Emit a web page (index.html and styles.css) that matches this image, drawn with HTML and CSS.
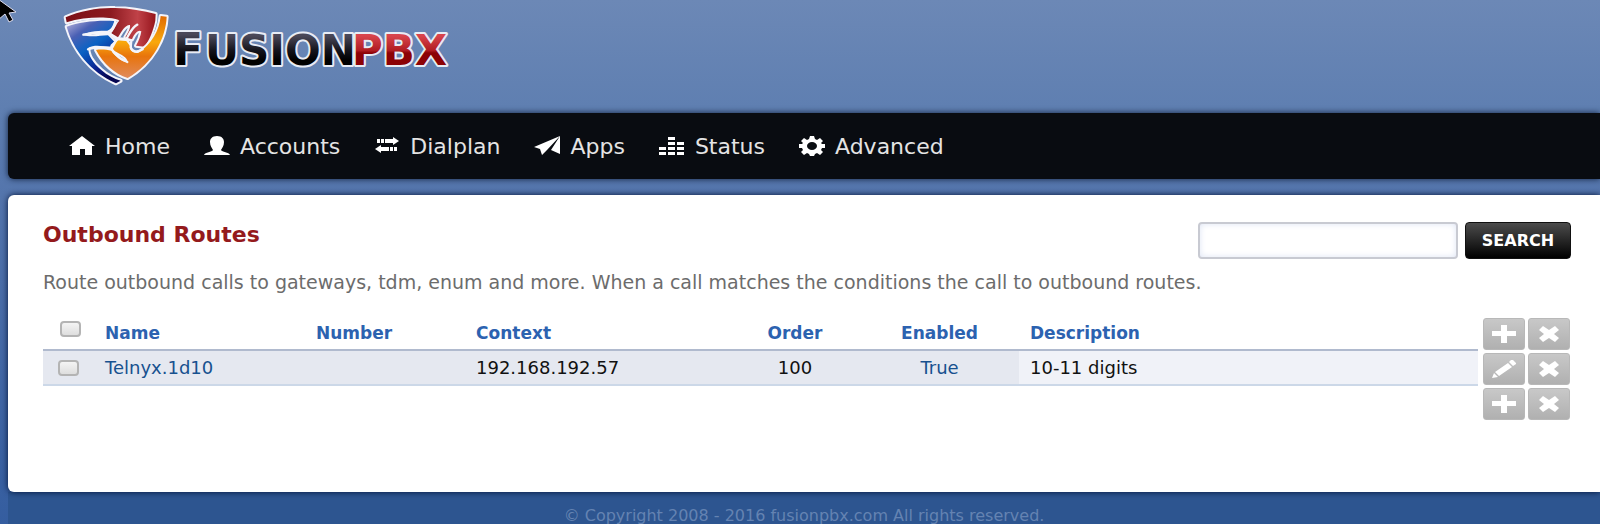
FILE: index.html
```html
<!DOCTYPE html>
<html lang="en">
<head>
  <meta charset="UTF-8">
  <meta name="viewport" content="width=device-width, initial-scale=1.0">
  <title>Outbound Routes</title>
  <link rel="stylesheet" href="styles.css">
</head>
<body>

  <!-- shared icons -->
  <svg class="sprite" aria-hidden="true">
    <symbol id="plus" viewBox="0 0 24 18"><path d="M9 0h6v6h9v5h-9v7H9v-7H0V6h9z"/></symbol>
    <symbol id="cross" viewBox="0 0 24 18"><path d="M6 1l6 4 6-4 4 4-5 4 5 4-4 4-6-4-6 4-4-4 5-4-5-4z"/></symbol>
    <symbol id="pencil" viewBox="0 0 24 18"><path d="M0 18l2-5 4 4zM3 12L16 3l4 4L7 16zM17 2l2-2h2l3 3v1l-3 2z"/></symbol>
  </svg>

  <svg class="cursor" viewBox="0 0 18 24" aria-hidden="true"><path d="M-2-1L16 12l-7 1 4 7-4 2-4-8-7 6z"/></svg>

  <header class="header">
    <a href="#" class="logo">
      <svg width="400" height="94" viewBox="60 0 400 94" role="img" aria-label="FusionPBX">
        <defs>
          <linearGradient id="red" x1="0" x2="1"><stop offset="0" stop-color="#7c1017"/><stop offset=".5" stop-color="#8c1a20"/><stop offset=".8" stop-color="#c04248"/><stop offset="1" stop-color="#96141c"/></linearGradient>
          <linearGradient id="blue" x1="0" y1="0" x2=".6" y2="1"><stop offset="0" stop-color="#b9b4dc"/><stop offset=".25" stop-color="#4a60b4"/><stop offset=".5" stop-color="#0b62c4"/><stop offset=".8" stop-color="#0a2290"/><stop offset="1" stop-color="#050550"/></linearGradient>
          <linearGradient id="orange" x1="0" y1="0" x2="0" y2="1"><stop offset="0" stop-color="#e06c04"/><stop offset=".42" stop-color="#f9a80c"/><stop offset=".65" stop-color="#e8740c"/><stop offset="1" stop-color="#e08a5c"/></linearGradient>
          <linearGradient id="ink" x1="0" y1="0" x2="0" y2="1"><stop offset=".2" stop-color="#4a4858"/><stop offset=".5" stop-color="#14141c"/><stop offset=".7" stop-color="#000"/></linearGradient>
          <linearGradient id="pbx" x1="0" y1="0" x2="0" y2="1"><stop offset=".2" stop-color="#d8444c"/><stop offset=".5" stop-color="#b01c22"/><stop offset=".55" stop-color="#8c0206"/></linearGradient>
        </defs>
        <g class="shield" transform="scale(.3333)">
          <path fill="url(#red)" d="M197 52C240 32 300 22 345 24C390 25 430 32 467 42L466 62C460 92 448 120 434 140L408 137C417 122 422 108 424 94C414 88 404 100 396 118L376 112C384 98 392 86 390 75C375 74 365 95 354 112L333 99C345 88 348 72 358 62C340 50 260 48 200 67Z"/>
          <path fill="url(#blue)" d="M200 80C240 66 290 60 343 63C340 76 334 88 322 92C300 92 270 92 248 105C270 113 300 107 324 106L343 125L332 140C308 140 286 132 266 143C262 162 278 188 304 210C322 226 342 236 362 242L348 250C270 215 220 150 200 80Z"/>
          <path fill="url(#orange)" d="M482 48L500 50C498 112 460 190 383 234C345 222 310 192 288 150C305 147 320 150 335 152C345 168 360 182 380 187C387 182 376 170 360 162C345 154 334 148 337 138L358 118L376 119L390 138C388 148 398 162 416 158C455 132 478 92 482 48Z"/>
        </g>
        <g class="gaps" transform="scale(.3333)">
          <path d="M250 104C274 98 300 98 326 98L350 118L336 144C310 144 286 138 264 148"/>
          <path d="M346 66C344 80 336 90 330 98"/>
          <path d="M412 74C398 80 390 98 380 115"/>
          <path d="M350 117L394 121L392 142C396 156 412 158 428 148"/>
          <path d="M334 146C344 166 362 176 382 186"/>
        </g>
        <g class="wordmark">
          <text x="173" y="65" font-size="44" fill="url(#ink)">F</text>
          <text x="205" y="65" font-size="42" fill="url(#ink)">USION</text>
          <text x="352" y="65" font-size="42" fill="url(#pbx)">PBX</text>
        </g>
      </svg>
    </a>
  </header>

  <nav class="menu">
    <a href="#"><svg viewBox="0 0 26 20"><path d="M13 0l13 10h-3v9h-7v-6h-5v6H3v-9H0z"/></svg>Home</a>
    <a href="#"><svg viewBox="0 0 26 20"><path d="M13 0c5 0 7 3 7 6 0 4-2 6-3 8 1 2 8 2 9 5H0c1-3 8-3 9-5-1-2-3-4-3-8 0-3 2-6 7-6z"/></svg>Accounts</a>
    <a href="#"><svg viewBox="0 0 26 20"><path d="M11 3h8V1l6 4-6 4V7h-8zM7 3h3v4H7zM3 3h3v4H3zM15 11H7V9l-6 4 6 4v-2h8zM16 11h3v4h-3zM20 11h3v4h-3z"/></svg>Dialplan</a>
    <a href="#"><svg viewBox="0 0 26 20"><path d="M26 0v18l-9-4L26 0 13 14l-5 5-2-6-6-2z"/></svg>Apps</a>
    <a href="#"><svg viewBox="0 0 26 20"><path d="M0 11h7v3H0zM0 16h7v3H0zM9 1h7v3H9zM9 6h7v3H9zM9 11h7v3H9zM9 16h7v3H9zM18 6h7v3h-7zM18 11h7v3h-7zM18 16h7v3h-7z"/></svg>Status</a>
    <a href="#"><svg viewBox="0 0 26 20"><path fill-rule="evenodd" d="M11 0h4l1 3 2 1 3-2 3 3-2 2 1 1h3v4h-3l-1 2 2 2-3 3-3-2-2 1-1 2h-4l-1-2-2-1-3 2-3-3 2-2-1-2H0V8h3l1-1-2-2 3-3 3 2 2-1zM13 6a5 4 0 1 0 0 8 5 4 0 0 0 0-8z"/></svg>Advanced</a>
  </nav>

  <main class="content">
    <div class="top">
      <h1>Outbound Routes</h1>
      <form class="search">
        <input type="text" name="search" aria-label="Search routes">
        <button type="button">SEARCH</button>
      </form>
    </div>
    <p class="intro">Route outbound calls to gateways, tdm, enum and more. When a call matches the conditions the call to outbound routes.</p>

    <table class="routes">
      <thead>
        <tr>
          <th class="check"><input type="checkbox" aria-label="Select all"></th>
          <th class="name"><a href="#">Name</a></th>
          <th class="number"><a href="#">Number</a></th>
          <th class="context"><a href="#">Context</a></th>
          <th class="order"><a href="#">Order</a></th>
          <th class="enabled"><a href="#">Enabled</a></th>
          <th class="description"><a href="#">Description</a></th>
          <td class="actions"><div>
            <button aria-label="Add"><svg><use href="#plus"/></svg></button>
            <button aria-label="Delete"><svg><use href="#cross"/></svg></button>
          </div></td>
        </tr>
      </thead>
      <tbody>
        <tr>
          <td class="check"><input type="checkbox" aria-label="Select Telnyx.1d10"></td>
          <td><a href="#">Telnyx.1d10</a></td>
          <td></td>
          <td>192.168.192.57</td>
          <td class="order">100</td>
          <td class="enabled"><a href="#">True</a></td>
          <td class="description">10-11 digits</td>
          <td class="actions"><div>
            <button aria-label="Edit"><svg><use href="#pencil"/></svg></button>
            <button aria-label="Delete"><svg><use href="#cross"/></svg></button>
          </div></td>
        </tr>
      </tbody>
      <tfoot>
        <tr>
          <td colspan="7"></td>
          <td class="actions"><div>
            <button aria-label="Add"><svg><use href="#plus"/></svg></button>
            <button aria-label="Delete"><svg><use href="#cross"/></svg></button>
          </div></td>
        </tr>
      </tfoot>
    </table>
  </main>

  <footer class="footer">© Copyright 2008 - 2016 fusionpbx.com All rights reserved.</footer>

</body>
</html>
```

FILE: styles.css
```css
* {
  box-sizing: border-box;
}

html {
  min-height: 100%;
  background: linear-gradient(#6c88b6, #5f7fb1 20%, #5475ac 36%, #335c9f);
}

body {
  margin: 0;
  padding-left: 8px;
  font-family: "DejaVu Sans", Verdana, sans-serif;
  font-size: 18px;
  color: #111;
  overflow: hidden;
}

a {
  color: #17518f;
  text-decoration: none;
}

.sprite {
  display: none;
}

.cursor {
  position: absolute;
  top: 0;
  left: 0;
  width: 18px;
  height: 24px;
  fill: #000;
  stroke: #dde;
  stroke-width: 1;
}

/* logo */
.header {
  height: 113px;
  padding-left: 52px;
}

.logo {
  display: inline-block;
}

.logo svg {
  display: block;
}

.shield path {
  stroke: #f4f4fa;
  stroke-width: 12;
  stroke-linejoin: round;
  paint-order: stroke;
}

.gaps path {
  fill: none;
  stroke: #f4f4fa;
  stroke-width: 7;
  stroke-linecap: round;
}

.wordmark text {
  font-weight: bold;
  stroke: #e8ecf4;
  stroke-width: 4;
  stroke-linejoin: round;
  paint-order: stroke;
}

/* main menu */
.menu {
  display: flex;
  align-items: center;
  gap: 34px;
  height: 66px;
  margin-bottom: 16px;
  padding-left: 61px;
  background: #090c11;
  border-radius: 6px 0 0 6px;
  box-shadow: 0 0 6px #10203c;
}

.menu a {
  display: flex;
  align-items: center;
  gap: 10px;
  color: #e4e4e4;
  font-size: 22px;
}

.menu svg {
  width: 26px;
  height: 20px;
  fill: #fff;
}

/* page */
.content {
  position: relative;
  min-height: 297px;
  padding: 27px 29px 27px 35px;
  background: #fff;
  border-radius: 6px 0 0 6px;
  box-shadow: 0 0 6px #001236;
}

.top {
  display: flex;
  justify-content: space-between;
  align-items: flex-start;
}

h1 {
  margin: 0;
  font-size: 22px;
  line-height: 26px;
  color: #941a1c;
}

.search {
  display: flex;
  gap: 7px;
}

.search input {
  width: 260px;
  height: 37px;
  border: 2px solid #c8cad2;
  border-radius: 4px;
  background: #fff;
  box-shadow: inset 0 0 6px #dde4f4;
}

.search button {
  width: 106px;
  height: 37px;
  padding: 0;
  border: 1px solid #111;
  border-radius: 4px;
  background: linear-gradient(#4c4c4c, #000);
  color: #fff;
  font: bold 16px "DejaVu Sans", sans-serif;
}

.intro {
  margin: 11px 0 22px;
  font-size: 19px;
  line-height: 24px;
  color: #6c6c6c;
}

.routes {
  width: 100%;
  table-layout: fixed;
  border-collapse: separate;
  border-spacing: 0;
}

.routes tr {
  height: 35px;
}

.routes th,
.routes td {
  padding: 0 0 0 11px;
  text-align: left;
}

.routes th {
  border-bottom: 2px solid #b0bace;
  font-size: 17px;
}

.routes th a {
  color: #2c62b0;
}

.routes tbody td {
  background: #e5e8f0;
  border-bottom: 2px solid #ccd8e8;
}

.routes tbody .description {
  background: #f0f2f8;
}

.routes .check { width: 51px; padding-left: 15px; }
.routes thead .check { padding: 0 0 7px 17px; }
.routes .name { width: 211px; }
.routes .number { width: 160px; }
.routes .context { width: 255px; }
.routes .order { width: 150px; padding: 0; text-align: center; }
.routes .enabled { width: 149px; padding: 0 10px 0 0; text-align: center; }

.routes input {
  display: block;
  width: 21px;
  height: 16px;
  margin: 0;
  appearance: none;
  border: 2px solid #b4b4b4;
  border-radius: 4px;
  background: linear-gradient(#f4f4f4, #dedede);
}

.routes .actions {
  width: 93px;
  padding: 0 0 0 5px;
  background: none;
  border: 0;
}

.actions div {
  display: flex;
  gap: 3px;
}

.actions button {
  display: flex;
  align-items: center;
  justify-content: center;
  width: 42px;
  height: 32px;
  padding: 0;
  border: 1px solid #b8b8b8;
  border-radius: 3px;
  background: linear-gradient(#c8c8c8, #b0b0b0);
}

.actions svg {
  width: 24px;
  height: 18px;
  fill: #fff;
}

.footer {
  height: 48px;
  padding-top: 13px;
  background: #2d5590;
  color: #6483b2;
  font-size: 16px;
  line-height: 22px;
  text-align: center;
}
```
